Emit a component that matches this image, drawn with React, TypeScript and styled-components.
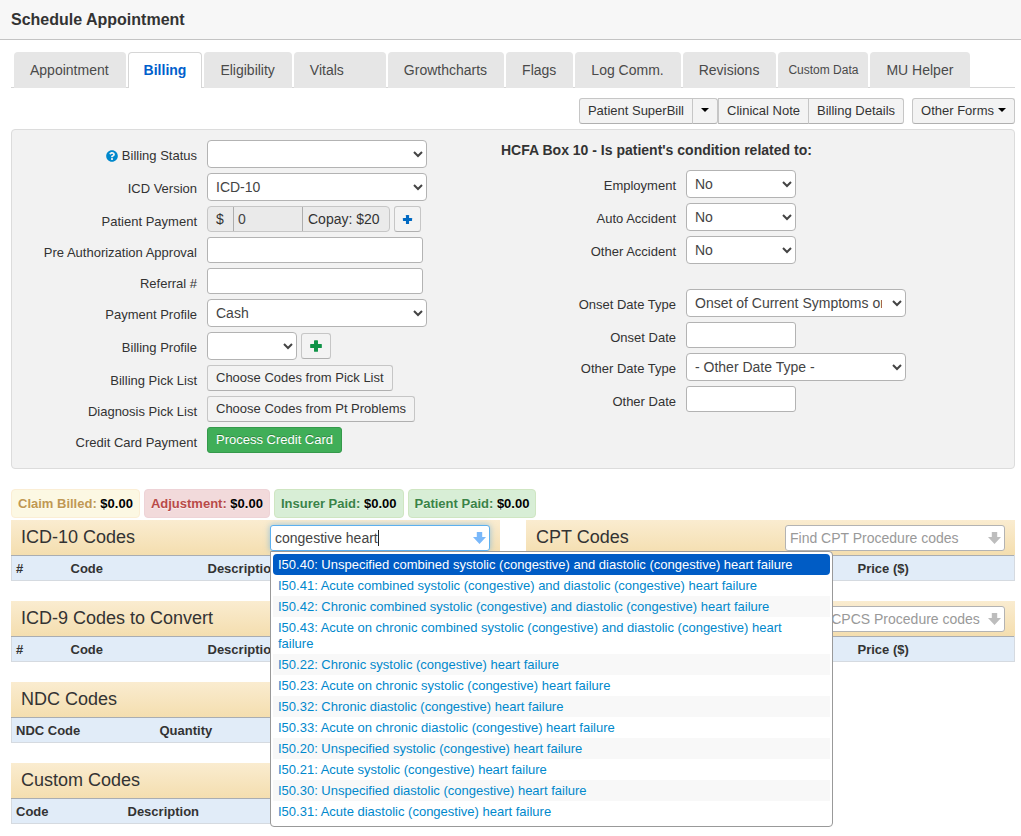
import React, { useLayoutEffect, useRef, useState } from "react";
import styled, { createGlobalStyle, css } from "styled-components";
import { FaQuestionCircle } from "react-icons/fa";

const GlobalStyle = createGlobalStyle`
  *, *::before, *::after { box-sizing: border-box; }
  body {
    margin: 0;
    background: #fff;
    color: #333;
    font: 13px/20px "Liberation Sans", Arial, sans-serif;
  }
  button, input, select { font-family: inherit; }
`;

/* ---------- page frame ---------- */

const Header = styled.header`
  padding: 10px 11px 9px;
  background: #f7f7f7;
  border-bottom: 1px solid #c4c4c4;
`;

const Title = styled.h1`
  margin: 0;
  font-size: 16px;
  line-height: 20px;
`;

const Content = styled.main`
  padding: 12px 6px 9px 11px;
`;

const Tabs = styled.nav`
  display: flex;
  gap: 2px;
  padding-left: 3px;
  border-bottom: 1px solid #d6d6d6;
`;

const Tab = styled.a<{ $active?: boolean; $compact?: boolean; $wide?: boolean }>`
  height: 36px;
  margin-bottom: -1px;
  padding: ${(p) => (p.$compact ? "8px 10px" : "8px 17px 8px 16px")};
  border-radius: 4px 4px 0 0;
  background: #e6e6e6;
  color: #4a4a4a;
  font-size: ${(p) => (p.$compact ? 12 : 14)}px;
  white-space: nowrap;
  text-decoration: none;
  ${(p) => p.$wide && css`min-width: 92px;`}
  ${(p) =>
    p.$active &&
    css`
      padding: 7px 15px 8px;
      border: 1px solid #d6d6d6;
      border-bottom: 0;
      background: #fff;
      color: #0060cc;
      font-weight: bold;
    `}
`;

const Toolbar = styled.div`
  display: flex;
  justify-content: flex-end;
  gap: 8px;
  margin: 10px 0 5px;
`;

const ButtonGroup = styled.div`
  display: flex;
`;

const Button = styled.button<{
  $variant?: "success";
  $icon?: boolean;
  $place?: "first" | "middle" | "last";
}>`
  display: inline-flex;
  align-items: center;
  justify-content: center;
  gap: 4px;
  height: 26px;
  padding: 0 ${(p) => (p.$icon ? 7 : 8)}px;
  border: 1px solid #c6c6c6;
  border-bottom-color: #b0b0b0;
  border-radius: 3px;
  background: #f3f3f3;
  color: #333;
  font-size: 13px;
  line-height: 20px;
  white-space: nowrap;
  ${(p) => p.$place === "first" && css`border-radius: 3px 0 0 3px;`}
  ${(p) => p.$place === "middle" && css`border-radius: 0;`}
  ${(p) => p.$place === "last" && css`margin-left: -1px; border-radius: 0 3px 3px 0;`}
  ${(p) =>
    p.$variant === "success" &&
    css`
      border-color: #35994b;
      background: #40ae58;
      color: #fff;
      text-shadow: 0 -1px 0 rgba(0, 0, 0, 0.25);
    `}
`;

const Caret = styled.i`
  border: 4px solid transparent;
  border-top-color: #000;
  border-bottom: 0;
  margin-bottom: 3px;
`;

/* ---------- billing form ---------- */

const Panel = styled.form`
  display: grid;
  grid-template-columns: 479px 1fr;
  padding: 10px 10px 15px;
  border: 1px solid #dcdcdc;
  border-radius: 4px;
  background: #f2f2f2;
`;

const Column = styled.div`
  display: flex;
  flex-direction: column;
  gap: 5px;
`;

const ColumnTitle = styled.h2`
  margin: 0 0 5px;
  font-size: 14px;
  line-height: 20px;
`;

const Row = styled.div<{ $spaced?: boolean }>`
  display: grid;
  grid-template-columns: 175px 1fr;
  column-gap: 10px;
  ${(p) => p.$spaced && css`margin-top: 20px;`}
`;

const Label = styled.label`
  display: flex;
  align-items: center;
  justify-content: flex-end;
  gap: 4px;
  height: 20px;
  margin-top: 6px;
  white-space: nowrap;
  svg { color: #0088cc; }
`;

const Controls = styled.div`
  display: flex;
  align-items: center;
  gap: 4px;
`;

const widths = { sm: 90, md: 110, input: 216, lg: 220 };

const Select = styled.select<{ $size?: keyof typeof widths }>`
  width: ${(p) => widths[p.$size ?? "lg"]}px;
  height: 28px;
  padding: 0 7px 0 4px;
  border: 1px solid #b3b3b3;
  border-radius: 4px;
  background: #fff;
  color: #444;
  font-size: 14px;
`;

const TextInput = styled.input<{ $size?: keyof typeof widths }>`
  width: ${(p) => widths[p.$size ?? "input"]}px;
  height: 26px;
  padding: 0 6px;
  border: 1px solid #b3b3b3;
  border-radius: 3px;
  background: #fff;
  color: #444;
  font-size: 14px;
`;

const Payment = styled.div`
  display: flex;
  height: 26px;
  border: 1px solid #c6c6c6;
  border-radius: 4px;
  background: #eaeaea;
  color: #333;
  font-size: 14px;
  line-height: 24px;
  overflow: hidden;
`;

const AddOn = styled.span<{ $wide?: boolean }>`
  width: ${(p) => (p.$wide ? 86 : 25)}px;
  padding-left: ${(p) => (p.$wide ? 5 : 8)}px;
`;

const AmountInput = styled.input`
  width: 70px;
  padding: 0 4px;
  border: 1px solid #adadad;
  border-top-color: #c6c6c6;
  border-bottom-color: #c6c6c6;
  margin: -1px 0;
  background: #eaeaea;
  color: #444;
  font-size: 14px;
`;

/* ---------- totals ---------- */

const Totals = styled.div`
  display: flex;
  gap: 4px;
  margin: 20px 0 2px;
`;

const tones = {
  warning: ["#c09853", "#fcf8e3", "#fbeed5"],
  danger: ["#b94a48", "#f2dadb", "#eed3d7"],
  success: ["#3a8347", "#d8eed6", "#cfe6c2"],
};

const Total = styled.div<{ $tone: keyof typeof tones }>`
  padding: 4px 6px;
  border: 1px solid ${(p) => tones[p.$tone][2]};
  border-radius: 4px;
  background: ${(p) => tones[p.$tone][1]};
  color: ${(p) => tones[p.$tone][0]};
  font-weight: bold;
  line-height: 19px;
  white-space: nowrap;
  text-shadow: 0 1px 0 rgba(255, 255, 255, 0.5);
  span { color: #000; }
`;

/* ---------- code sections ---------- */

const CodeGrid = styled.div`
  display: grid;
  grid-template-columns: 1fr 1fr;
  column-gap: 26px;
`;

const CodeColumn = styled.div`
  display: flex;
  flex-direction: column;
  gap: 20px;
`;

const SectionHead = styled.div`
  display: flex;
  height: 35px;
  padding: 5px 10px;
  background: linear-gradient(#faecd0, #f4deaf);
`;

const SectionTitle = styled.h3`
  margin: 0;
  font-size: 18px;
  font-weight: normal;
  line-height: 24px;
`;

const CodeTable = styled.table`
  width: 100%;
  table-layout: fixed;
  border-collapse: collapse;
  border: 1px solid #d5dae0;
  border-top-color: #a9adb2;
  background: #e1ecf8;
`;

const HeadCell = styled.th<{ $width?: number }>`
  ${(p) => p.$width && css`width: ${p.$width}px;`}
  height: 25px;
  padding: 2px 4px 0;
  text-align: left;
  white-space: nowrap;
`;

const SearchBox = styled.div`
  position: relative;
  width: 220px;
  height: 26px;
  margin-left: auto;
`;

const SearchInput = styled.input<{ $open?: boolean }>`
  width: 100%;
  height: 26px;
  padding: 0 24px 0 4px;
  border: 1px solid #b3b3b3;
  border-radius: 3px;
  background: #fff;
  color: #444;
  font-size: 14px;
  outline: none;
  &::placeholder { color: #999; }
  ${(p) =>
    p.$open &&
    css`
      border-color: #5db0ee;
      box-shadow: 0 0 6px rgba(82, 168, 236, 0.6);
      caret-color: transparent;
    `}
`;

const SearchArrow = styled.svg<{ $open?: boolean }>`
  position: absolute;
  top: 7px;
  right: 4px;
  color: ${(p) => (p.$open ? "#7ab8fa" : "#bdbdbd")};
`;

const TextCursor = styled.i`
  position: absolute;
  top: 5px;
  width: 1px;
  height: 16px;
  background: #222;
`;

const Menu = styled.ul`
  position: absolute;
  z-index: 10;
  top: 26px;
  left: 0;
  width: 563px;
  margin: 0;
  padding: 2px 2px 4px;
  border: 1px solid #999;
  border-radius: 0 4px 4px 4px;
  background: #fff;
  list-style: none;
`;

const MenuItem = styled.li<{ $selected?: boolean }>`
  padding: 3px 34px 2px 5px;
  line-height: 16px;
  &:nth-child(odd) { background: #f8f8f8; }
  a { color: #0088cc; text-decoration: none; }
  ${(p) =>
    p.$selected &&
    css`
      && { border-radius: 4px; background: #005cc5; }
      && a { color: #fff; }
    `}
`;

/* ---------- parts ---------- */

const PlusIcon = ({ color, size }: { color: string; size: number }) => (
  <svg width={size} height={size} viewBox="0 0 12 12" fill={color} aria-hidden="true">
    <rect x="4.3" y="1" width="3.4" height="10" rx=".5" />
    <rect x="1" y="4.3" width="10" height="3.4" rx=".5" />
  </svg>
);

const DownArrow = ({ open }: { open?: boolean }) => (
  <SearchArrow $open={open} width="13" height="12" viewBox="0 0 13 12" fill="currentColor" aria-hidden="true">
    <path d="M3.8 0h5.4v5H13L6.5 12 0 5h3.8z" />
  </SearchArrow>
);

const Field = ({ id, label, help, spaced, children }: {
  id: string; label: string; help?: boolean; spaced?: boolean; children: React.ReactNode;
}) => (
  <Row $spaced={spaced}>
    <Label htmlFor={id}>
      {help && <FaQuestionCircle size={12} />}
      {label}
    </Label>
    <Controls>{children}</Controls>
  </Row>
);

const Section = ({ title, search, columns }: {
  title?: string; search?: React.ReactNode; columns: [string, number?][];
}) => (
  <section>
    <SectionHead>
      {title && <SectionTitle>{title}</SectionTitle>}
      {search}
    </SectionHead>
    <CodeTable>
      <thead>
        <tr>
          {columns.map(([name, width]) => (
            <HeadCell key={name} $width={width}>{name}</HeadCell>
          ))}
        </tr>
      </thead>
    </CodeTable>
  </section>
);

const Search = ({ label }: { label: string }) => (
  <SearchBox>
    <SearchInput aria-label={label} placeholder={label} />
    <DownArrow />
  </SearchBox>
);

const matches = [
  "I50.40: Unspecified combined systolic (congestive) and diastolic (congestive) heart failure",
  "I50.41: Acute combined systolic (congestive) and diastolic (congestive) heart failure",
  "I50.42: Chronic combined systolic (congestive) and diastolic (congestive) heart failure",
  "I50.43: Acute on chronic combined systolic (congestive) and diastolic (congestive) heart failure",
  "I50.22: Chronic systolic (congestive) heart failure",
  "I50.23: Acute on chronic systolic (congestive) heart failure",
  "I50.32: Chronic diastolic (congestive) heart failure",
  "I50.33: Acute on chronic diastolic (congestive) heart failure",
  "I50.20: Unspecified systolic (congestive) heart failure",
  "I50.21: Acute systolic (congestive) heart failure",
  "I50.30: Unspecified diastolic (congestive) heart failure",
  "I50.31: Acute diastolic (congestive) heart failure",
];

const DiagnosisSearch = () => {
  const [query, setQuery] = useState("congestive heart");
  const [cursor, setCursor] = useState(5);
  const input = useRef<HTMLInputElement>(null);

  useLayoutEffect(() => {
    const context = document.createElement("canvas").getContext("2d");
    if (!context || !input.current) return;
    context.font = getComputedStyle(input.current).font;
    setCursor(5 + Math.round(context.measureText(query).width));
  }, [query]);

  return (
    <SearchBox>
      <SearchInput
        ref={input}
        $open
        aria-label="Find ICD-10 diagnosis codes"
        value={query}
        onChange={(event) => setQuery(event.target.value)}
      />
      <TextCursor style={{ left: cursor }} />
      <DownArrow open />
      <Menu>
        {matches.map((match, index) => (
          <MenuItem key={match} $selected={index === 0}>
            <a href="#code">{match}</a>
          </MenuItem>
        ))}
      </Menu>
    </SearchBox>
  );
};

const tabs = ["Appointment", "Billing", "Eligibility", "Vitals", "Growthcharts", "Flags", "Log Comm.", "Revisions", "Custom Data", "MU Helper"];

const diagnosisColumns: [string, number?][] = [["#", 55], ["Code", 137], ["Description"]];
const procedureColumns: [string, number?][] = [[""], ["Price ($)", 161]];

export default function App() {
  return (
    <>
      <GlobalStyle />
      <Header>
        <Title>Schedule Appointment</Title>
      </Header>
      <Content>
        <Tabs>
          {tabs.map((tab) => (
            <Tab
              key={tab}
              href="#tab"
              $active={tab === "Billing"}
              $compact={tab === "Custom Data"}
              $wide={tab === "Vitals"}
            >
              {tab}
            </Tab>
          ))}
        </Tabs>

        <Toolbar>
          <ButtonGroup>
            <Button $place="first">Patient SuperBill</Button>
            <Button $place="last" aria-label="More SuperBill options"><Caret /></Button>
            <Button $place="middle">Clinical Note</Button>
            <Button $place="last">Billing Details</Button>
          </ButtonGroup>
          <Button>Other Forms<Caret /></Button>
        </Toolbar>

        <Panel onSubmit={(event) => event.preventDefault()}>
          <Column>
            <Field id="status" label="Billing Status" help>
              <Select id="status"><option></option></Select>
            </Field>
            <Field id="icd" label="ICD Version">
              <Select id="icd"><option>ICD-10</option></Select>
            </Field>
            <Field id="payment" label="Patient Payment">
              <Payment>
                <AddOn>$</AddOn>
                <AmountInput id="payment" defaultValue="0" />
                <AddOn $wide>Copay: $20</AddOn>
              </Payment>
              <Button type="button" $icon aria-label="Add payment"><PlusIcon color="#0069c2" size={11} /></Button>
            </Field>
            <Field id="preauth" label="Pre Authorization Approval"><TextInput id="preauth" /></Field>
            <Field id="referral" label="Referral #"><TextInput id="referral" /></Field>
            <Field id="profile" label="Payment Profile">
              <Select id="profile"><option>Cash</option></Select>
            </Field>
            <Field id="billing-profile" label="Billing Profile">
              <Select id="billing-profile" $size="sm"><option></option></Select>
              <Button type="button" $icon aria-label="Add billing profile"><PlusIcon color="#0f9347" size={14} /></Button>
            </Field>
            <Field id="pick" label="Billing Pick List">
              <Button type="button" id="pick">Choose Codes from Pick List</Button>
            </Field>
            <Field id="problems" label="Diagnosis Pick List">
              <Button type="button" id="problems">Choose Codes from Pt Problems</Button>
            </Field>
            <Field id="card" label="Credit Card Payment">
              <Button type="button" id="card" $variant="success">Process Credit Card</Button>
            </Field>
          </Column>

          <Column>
            <ColumnTitle>HCFA Box 10 - Is patient's condition related to:</ColumnTitle>
            <Field id="employment" label="Employment">
              <Select id="employment" $size="md"><option>No</option></Select>
            </Field>
            <Field id="auto" label="Auto Accident">
              <Select id="auto" $size="md"><option>No</option></Select>
            </Field>
            <Field id="other-accident" label="Other Accident">
              <Select id="other-accident" $size="md"><option>No</option></Select>
            </Field>
            <Field id="onset-type" label="Onset Date Type" spaced>
              <Select id="onset-type"><option>Onset of Current Symptoms or Illness</option></Select>
            </Field>
            <Field id="onset" label="Onset Date"><TextInput id="onset" $size="md" /></Field>
            <Field id="other-type" label="Other Date Type">
              <Select id="other-type"><option>- Other Date Type -</option></Select>
            </Field>
            <Field id="other-date" label="Other Date"><TextInput id="other-date" $size="md" /></Field>
          </Column>
        </Panel>

        <Totals>
          <Total $tone="warning">Claim Billed: <span>$0.00</span></Total>
          <Total $tone="danger">Adjustment: <span>$0.00</span></Total>
          <Total $tone="success">Insurer Paid: <span>$0.00</span></Total>
          <Total $tone="success">Patient Paid: <span>$0.00</span></Total>
        </Totals>

        <CodeGrid>
          <CodeColumn>
            <Section title="ICD-10 Codes" search={<DiagnosisSearch />} columns={diagnosisColumns} />
            <Section title="ICD-9 Codes to Convert" columns={diagnosisColumns} />
            <Section title="NDC Codes" columns={[["NDC Code", 144], ["Quantity"]]} />
            <Section title="Custom Codes" columns={[["Code", 112], ["Description"]]} />
          </CodeColumn>
          <CodeColumn>
            <Section title="CPT Codes" search={<Search label="Find CPT Procedure codes" />} columns={procedureColumns} />
            <Section search={<Search label="Find HCPCS Procedure codes" />} columns={procedureColumns} />
          </CodeColumn>
        </CodeGrid>
      </Content>
    </>
  );
}
